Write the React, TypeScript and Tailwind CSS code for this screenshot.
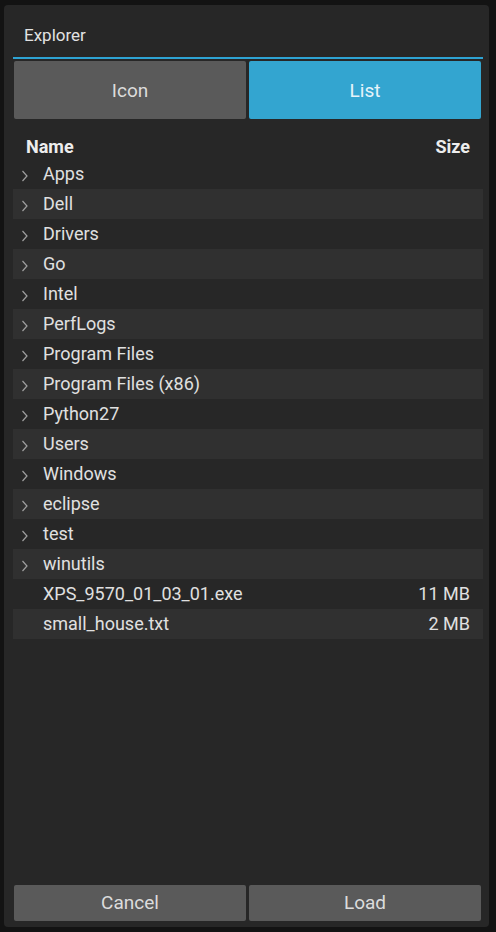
import React from "react";

type Entry = { name: string; size?: string; dir: boolean };

const entries: Entry[] = [
  { name: "Apps", dir: true },
  { name: "Dell", dir: true },
  { name: "Drivers", dir: true },
  { name: "Go", dir: true },
  { name: "Intel", dir: true },
  { name: "PerfLogs", dir: true },
  { name: "Program Files", dir: true },
  { name: "Program Files (x86)", dir: true },
  { name: "Python27", dir: true },
  { name: "Users", dir: true },
  { name: "Windows", dir: true },
  { name: "eclipse", dir: true },
  { name: "test", dir: true },
  { name: "winutils", dir: true },
  { name: "XPS_9570_01_03_01.exe", size: "11 MB", dir: false },
  { name: "small_house.txt", size: "2 MB", dir: false },
];

function Chevron() {
  return (
    <svg width="8" height="12" viewBox="0 0 8 12" className="mt-[6px]">
      <path d="M1.5 1 L6 6 L1.5 11" fill="none" stroke="#a0a0a0" strokeWidth="1.2" />
    </svg>
  );
}

export default function App() {
  return (
    <div
      className="h-[932px] w-[496px] overflow-hidden bg-[#131313] pt-[5px] pl-[4px]"
      style={{ fontFamily: "Roboto, 'Liberation Sans', sans-serif" }}
    >
      <div className="flex h-[922px] w-[485px] flex-col rounded-[4px] bg-[#272727] pl-[9px] pr-[2px]">
        {/* title */}
        <div className="flex h-[52px] items-center pl-[11px] pt-[10px] text-[17px] text-[#e2e2e2]">
          Explorer
        </div>
        <div className="h-[2px] w-[470px] bg-[#2ea3d3]" />

        {/* view toggle */}
        <div className="mt-[2px] flex w-[470px] gap-[3px] pl-[1px] pr-[2px]">
          <button className="h-[58px] flex-1 rounded-[2px] bg-[#5a5a5a] pt-[2px] text-[19px] text-[#dcdcdc]">
            Icon
          </button>
          <button className="h-[58px] flex-1 rounded-[2px] bg-[#33a5d0] pt-[2px] text-[19px] text-[#e6f4fa]">
            List
          </button>
        </div>

        {/* header */}
        <div className="flex h-[40px] w-[470px] items-start justify-between pl-[13px] pr-[13px] pt-[17px] text-[18px] font-bold leading-[21px] text-[#ededed]">
          <span>Name</span>
          <span>Size</span>
        </div>

        {/* rows */}
        <div className="flex w-[470px] flex-col">
          {entries.map((e, i) => (
            <div
              key={e.name}
              className={
                "flex h-[30px] items-center pb-[2px] pr-[13px] text-[18px] text-[#e0e0e0] " +
                (i % 2 === 1 ? "bg-[#303030]" : "")
              }
            >
              <div className="flex w-[30px] pl-[8px]">{e.dir ? <Chevron /> : null}</div>
              <span className="flex-1">{e.name}</span>
              {e.size ? <span>{e.size}</span> : null}
            </div>
          ))}
        </div>

        <div className="flex-1" />

        {/* footer */}
        <div className="mb-[6px] flex w-[470px] gap-[3px] pl-[1px] pr-[2px]">
          <button className="h-[36px] flex-1 rounded-[2px] bg-[#5a5a5a] pt-[1px] text-[19px] text-[#dcdcdc]">
            Cancel
          </button>
          <button className="h-[36px] flex-1 rounded-[2px] bg-[#5a5a5a] pt-[1px] text-[19px] text-[#dcdcdc]">
            Load
          </button>
        </div>
      </div>
    </div>
  );
}
